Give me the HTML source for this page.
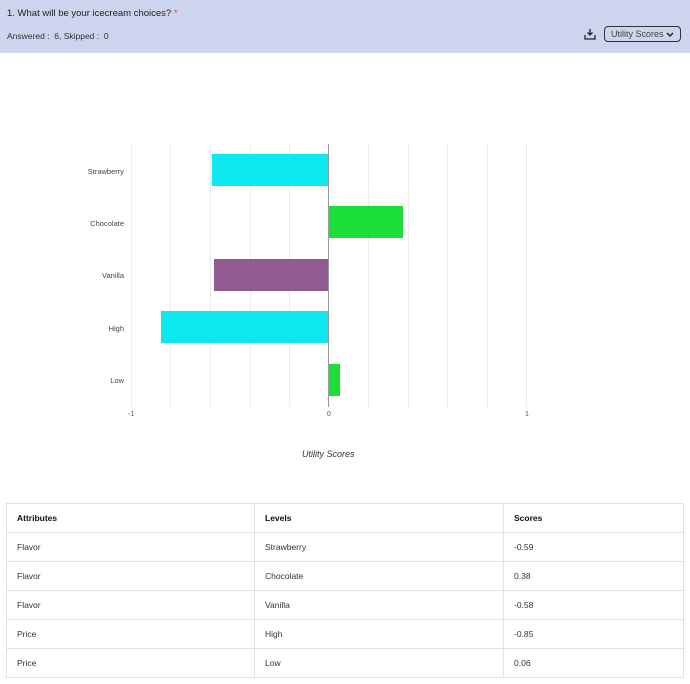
<!DOCTYPE html>
<html><head><meta charset="utf-8"><style>
body{margin:0;width:690px;height:684px;background:#fff;font-family:"Liberation Sans",sans-serif;position:relative;overflow:hidden}
.hdr{position:absolute;left:0;top:0;width:690px;height:53px;background:#cdd4ed}
.t1{position:absolute;left:7px;top:8px;font-size:9.5px;color:#222}
.t2{position:absolute;left:7px;top:31px;font-size:8.5px;color:#333}
.btn{position:absolute;left:604px;top:26px;width:77px;height:16px;border:1px solid #333;border-radius:4px;font-size:9px;color:#444;line-height:14px;text-align:center;box-sizing:border-box}
.g{position:absolute;top:144px;height:263px;width:1px;background:#ececec}
.bar{position:absolute;height:32px;box-sizing:border-box}
.lbl{position:absolute;font-size:7.5px;color:#444;text-align:right;width:100px;left:24px}
.tick{position:absolute;top:411px;font-size:7px;color:#555}
table{position:absolute;left:6px;top:503px;width:677px;border-collapse:collapse;font-size:8.5px;color:#333;table-layout:fixed}
td{border:1px solid #dfe1e6;height:29px;padding:0 0 0 10px;box-sizing:border-box}
th{border:1px solid #dfe1e6;height:29px;padding:0 0 0 10px;text-align:left;font-weight:bold;color:#111;box-sizing:border-box}
</style></head><body>
<div class="hdr">
<div class="t1">1. What will be your icecream choices? <span style="color:#e44">*</span></div>
<div class="t2">Answered : &nbsp;6, Skipped : &nbsp;0</div>
<svg style="position:absolute;left:584px;top:28px" width="12" height="12" viewBox="0 0 12 12" fill="none" stroke="#222" stroke-width="1.3"><path d="M6 1v6M3.5 4.5L6 7l2.5-2.5M1 7v4h10V7"/></svg>
<div class="btn">Utility Scores <svg width="8" height="6" viewBox="0 0 8 6" style="vertical-align:middle"><path d="M1 1l3 3 3-3" stroke="#222" stroke-width="1.5" fill="none"/></svg></div>
</div>
<div class="g" style="left:131px"></div><div class="g" style="left:170px"></div><div class="g" style="left:210px"></div><div class="g" style="left:250px"></div><div class="g" style="left:289px"></div><div class="g" style="left:368px"></div><div class="g" style="left:408px"></div><div class="g" style="left:447px"></div><div class="g" style="left:487px"></div><div class="g" style="left:526px"></div>
<div class="bar" style="left:212px;width:117px;top:154px;background:#0ee8f0"></div>
<div class="bar" style="left:329px;width:74px;top:206px;background:#1bdf38"></div>
<div class="bar" style="left:214px;width:115px;top:259px;background:#8f5b91"></div>
<div class="bar" style="left:161px;width:168px;top:311px;background:#0ee8f0"></div>
<div class="bar" style="left:329px;width:11px;top:364px;background:#1bdf38"></div>
<div style="position:absolute;left:328px;top:144px;width:1px;height:263px;background:#999"></div>
<div class="lbl" style="top:167px">Strawberry</div>
<div class="lbl" style="top:219px">Chocolate</div>
<div class="lbl" style="top:271px">Vanilla</div>
<div class="lbl" style="top:324px">High</div>
<div class="lbl" style="top:376px">Low</div>
<div class="tick" style="left:128px">-1</div>
<div class="tick" style="left:327px">0</div>
<div class="tick" style="left:525px">1</div>
<div style="position:absolute;left:302px;top:449px;font-size:9px;font-style:italic;color:#333">Utility Scores</div>
<table>
<colgroup><col style="width:248px"><col style="width:249px"><col style="width:180px"></colgroup>
<tr><th>Attributes</th><th>Levels</th><th>Scores</th></tr>
<tr><td>Flavor</td><td>Strawberry</td><td>-0.59</td></tr>
<tr><td>Flavor</td><td>Chocolate</td><td>0.38</td></tr>
<tr><td>Flavor</td><td>Vanilla</td><td>-0.58</td></tr>
<tr><td>Price</td><td>High</td><td>-0.85</td></tr>
<tr><td>Price</td><td>Low</td><td>0.06</td></tr>
</table>
</body></html>
